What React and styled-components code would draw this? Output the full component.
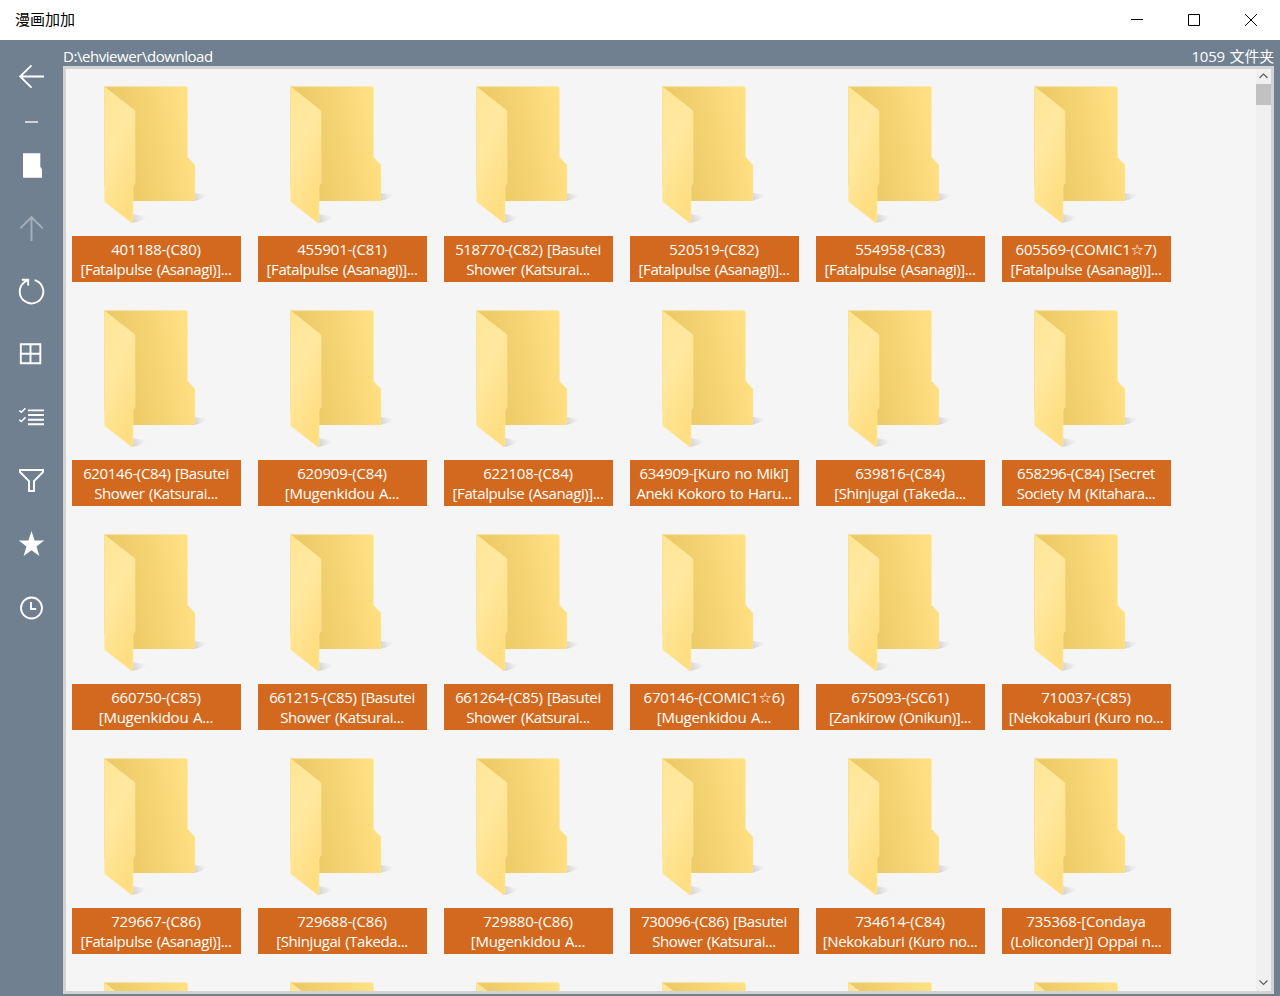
import React from 'react';
import styled, { createGlobalStyle } from 'styled-components';

const GlobalStyle = createGlobalStyle`
  * { box-sizing: border-box; }
  body { margin: 0; background: #708090; overflow: hidden; }
`;

const Window = styled.div`
  width: 1280px;
  height: 996px;
  display: flex;
  flex-direction: column;
  overflow: hidden;
  background: #708090;
  color: #fff;
  font: 15px/20px "Open Sans", "DejaVu Sans", "Noto Sans CJK SC", sans-serif;
`;

const TitleBar = styled.header`
  height: 40px;
  flex: none;
  display: flex;
  justify-content: space-between;
  align-items: center;
  background: #fff;
  color: #000;
`;

const Title = styled.div`
  padding: 0 0 2px 15px;
  font-family: "Noto Sans CJK SC", sans-serif;
  font-size: 15px;
`;

const WindowButtons = styled.div`
  display: flex;
`;

const WindowButton = styled.svg`
  width: 57px;
  height: 40px;
  fill: none;
  stroke: #000;
`;

const Body = styled.div`
  flex: 1;
  min-height: 0;
  display: flex;
`;

const Sidebar = styled.nav`
  width: 63px;
  flex: none;
  padding-top: 5px;
`;

const NavIcon = styled.svg`
  display: block;
  width: 63px;
  height: ${(p) => p.$height || 63}px;
  fill: none;
  stroke: ${(p) => (p.$disabled ? '#a6b0ba' : '#fff')};
  stroke-width: 1.9;
`;

const Main = styled.main`
  flex: 1;
  min-width: 0;
  display: flex;
  flex-direction: column;
  padding: 0 6px 2px 0;
`;

const PathBar = styled.div`
  height: 26px;
  flex: none;
  display: flex;
  justify-content: space-between;
  padding-top: 6px;
`;

const Text = styled.span`
  white-space: nowrap;
  word-spacing: 1px;
  letter-spacing: ${(p) => p.$track || 0}px;
`;

const Panel = styled.section`
  flex: 1;
  min-height: 0;
  display: flex;
  justify-content: space-between;
  border: 3px solid #d3d3d3;
  background: #f5f5f5;
`;

const Grid = styled.div`
  display: grid;
  grid-template-columns: repeat(6, 169px);
  grid-auto-rows: 196px;
  column-gap: 17px;
  row-gap: 28px;
  padding: 17px 0 0 6px;
  overflow: hidden;
`;

const Item = styled.article`
  height: 196px;
`;

const FolderSvg = styled.svg`
  display: block;
  width: 169px;
  height: 150px;
`;

const Label = styled.div`
  height: 46px;
  padding: 3px 1px 0 0;
  display: flex;
  flex-direction: column;
  align-items: center;
  background: #d2691e;
`;

const Scrollbar = styled.div`
  width: 15px;
  display: flex;
  flex-direction: column;
  background: #f0f0f0;
`;

const ScrollArrow = styled.svg`
  width: 15px;
  height: 15px;
  fill: none;
  stroke: #606060;
  stroke-width: 1.2;
`;

const Thumb = styled.div`
  height: 21px;
  background: #c1c1c1;
`;

const Spacer = styled.div`
  flex: 1;
`;

const FAT = '[Fatalpulse (Asanagi)]...';
const SHOWER = 'Shower (Katsurai...';
const MUG = '[Mugenkidou A...';
const SHIN = '[Shinjugai (Takeda...';
const NEKO = '[Nekokaburi (Kuro no...';

const folders = [
  ['401188-(C80)', FAT],
  ['455901-(C81)', FAT],
  ['518770-(C82) [Basutei', SHOWER],
  ['520519-(C82)', FAT],
  ['554958-(C83)', FAT],
  ['605569-(COMIC1☆7)', FAT],
  ['620146-(C84) [Basutei', SHOWER],
  ['620909-(C84)', MUG],
  ['622108-(C84)', FAT],
  ['634909-[Kuro no Miki]', 'Aneki Kokoro to Haru...'],
  ['639816-(C84)', SHIN],
  ['658296-(C84) [Secret', 'Society M (Kitahara...'],
  ['660750-(C85)', MUG],
  ['661215-(C85) [Basutei', SHOWER],
  ['661264-(C85) [Basutei', SHOWER],
  ['670146-(COMIC1☆6)', MUG],
  ['675093-(SC61)', '[Zankirow (Onikun)]...'],
  ['710037-(C85)', NEKO],
  ['729667-(C86)', FAT],
  ['729688-(C86)', SHIN],
  ['729880-(C86)', MUG],
  ['730096-(C86) [Basutei', SHOWER],
  ['734614-(C84)', NEKO],
  ['735368-[Condaya', '(Loliconder)] Oppai n...'],
  [], [], [], [], [], [],
];

// Lines made mostly of digits need less tightening than lines of letters.
const trackFor = (t) => {
  if (t === MUG) return -0.26;
  if (/^\d/.test(t)) return t.length > 18 ? -0.37 : -0.18;
  return -0.41;
};

const back = 'M64 0.5H145.5Q147.5 0.5 147.5 2.5V71L155 79V113Q155 115 153 115H90L64 100Z';
const front = 'M64.5 0.7L94 24Q95 25 95 26V97L93 100V135Q93 138 90.5 136L65 116Q64.5 115 64.5 113Z';

function Folder({ id }) {
  return (
    <FolderSvg viewBox="32 0 169 150">
      <defs>
        <linearGradient id={`back${id}`} gradientUnits="userSpaceOnUse" x1="80" y1="50" x2="149" y2="38">
          <stop offset="0" stopColor="#ecca67" />
          <stop offset="0.5" stopColor="#f5d473" />
          <stop offset="1" stopColor="#ffe083" />
        </linearGradient>
        <linearGradient id={`front${id}`} x1="0" y1="0" x2="0.45" y2="1">
          <stop offset="0" stopColor="#ffe595" />
          <stop offset="0.45" stopColor="#ffe8a0" />
          <stop offset="1" stopColor="#ffde82" />
        </linearGradient>
        <linearGradient id={`shade${id}`} x1="0" y1="0.6" x2="1" y2="0.4">
          <stop offset="0" stopColor="#777" stopOpacity="0.3" />
          <stop offset="1" stopColor="#999" stopOpacity="0" />
        </linearGradient>
      </defs>
      <path d="M153 115L155 107L168 109Q161 114 153 115Z" fill={`url(#shade${id})`} />
      <path d="M91 137L93 128L107 131Q101 136 91 137Z" fill={`url(#shade${id})`} />
      <path d={back} fill={`url(#back${id})`} />
      <path d="M66 0.8H145.5Q147.2 0.8 147.2 2.5V71L154.7 79V113" fill="none" stroke="#ffe591" strokeOpacity=".6" strokeWidth=".8" />
      <path d={front} fill={`url(#front${id})`} stroke="#ffe8a0" strokeWidth=".6" />
    </FolderSvg>
  );
}

const FolderItem = ({ id, lines }) => (
  <Item>
    <Folder id={id} />
    <Label>
      {lines.map((t) => <Text key={t} $track={trackFor(t)}>{t}</Text>)}
    </Label>
  </Item>
);

export default function App() {
  return (
    <Window>
      <GlobalStyle />
      <TitleBar>
        <Title>漫画加加</Title>
        <WindowButtons>
          <WindowButton viewBox="0 0 57 40"><path d="M22 19.5H34" /></WindowButton>
          <WindowButton viewBox="0 0 57 40"><path d="M22.5 14.5h11v11h-11z" /></WindowButton>
          <WindowButton viewBox="0 0 57 40"><path d="M22 14l12 12M34 14L22 26" /></WindowButton>
        </WindowButtons>
      </TitleBar>
      <Body>
        <Sidebar>
          <NavIcon viewBox="0 45 63 63"><path d="M20 76.5H44M31.5 65.3L20.2 76.5L31.5 87.7" /></NavIcon>
          <NavIcon $height={26} viewBox="0 108 63 26"><path d="M25 122H38" stroke="#d5dade" /></NavIcon>
          <NavIcon viewBox="0 134 63 63"><path d="M23 153.3H40.3V167L42 169V177.7H23Z" fill="#fff" stroke="none" /></NavIcon>
          <NavIcon $disabled viewBox="0 197 63 63"><path d="M31.5 241V217M20.3 228.3L31.5 217L42.7 228.3" /></NavIcon>
          <NavIcon viewBox="0 260 63 63"><path d="M34.6 280.2A11.8 11.8 0 1 1 24 282.5L28 279.8M21.8 279.8H28.2V285.5" /></NavIcon>
          <NavIcon viewBox="0 323 63 63"><path d="M20.8 344.2H40.3V363.2H20.8ZM30.5 344V363M21 353.7H40" /></NavIcon>
          <NavIcon viewBox="0 386 63 63"><path d="M28 410.4H44M28 415H44M28 419.7H44M28 424.3H44" /><path d="M19.3 410.5L21.3 412.3L25.5 408.2M19.3 419.7L21.3 421.5L25.5 417.4" strokeWidth="1.5" /></NavIcon>
          <NavIcon viewBox="0 449 63 63"><path d="M20 470H43V472L34 481.2V491H29V481.2L20 472Z" /></NavIcon>
          <NavIcon viewBox="0 512 63 63"><path d="M31.5 531L34.6 540.6H44.2L36.5 546.5L39.4 556L31.5 550.3L23.6 556L26.5 546.5L18.8 540.6H28.4Z" fill="#fff" stroke="none" /></NavIcon>
          <NavIcon viewBox="0 575 63 63"><circle cx="31.5" cy="608" r="10.5" /><path d="M31 602V609H36.2" /></NavIcon>
        </Sidebar>
        <Main>
          <PathBar>
            <Text $track={-0.45}>D:\ehviewer\download</Text>
            <Text $track={-0.2}>1059 文件夹</Text>
          </PathBar>
          <Panel>
            <Grid>
              {folders.map((lines, i) => <FolderItem key={i} id={i} lines={lines} />)}
            </Grid>
            <Scrollbar>
              <ScrollArrow viewBox="0 0 15 15"><path d="M3.5 9L7.5 5L11.5 9" /></ScrollArrow>
              <Thumb />
              <Spacer />
              <ScrollArrow viewBox="0 0 15 15"><path d="M3.5 4.5L7.5 8.5L11.5 4.5" /></ScrollArrow>
            </Scrollbar>
          </Panel>
        </Main>
      </Body>
    </Window>
  );
}
